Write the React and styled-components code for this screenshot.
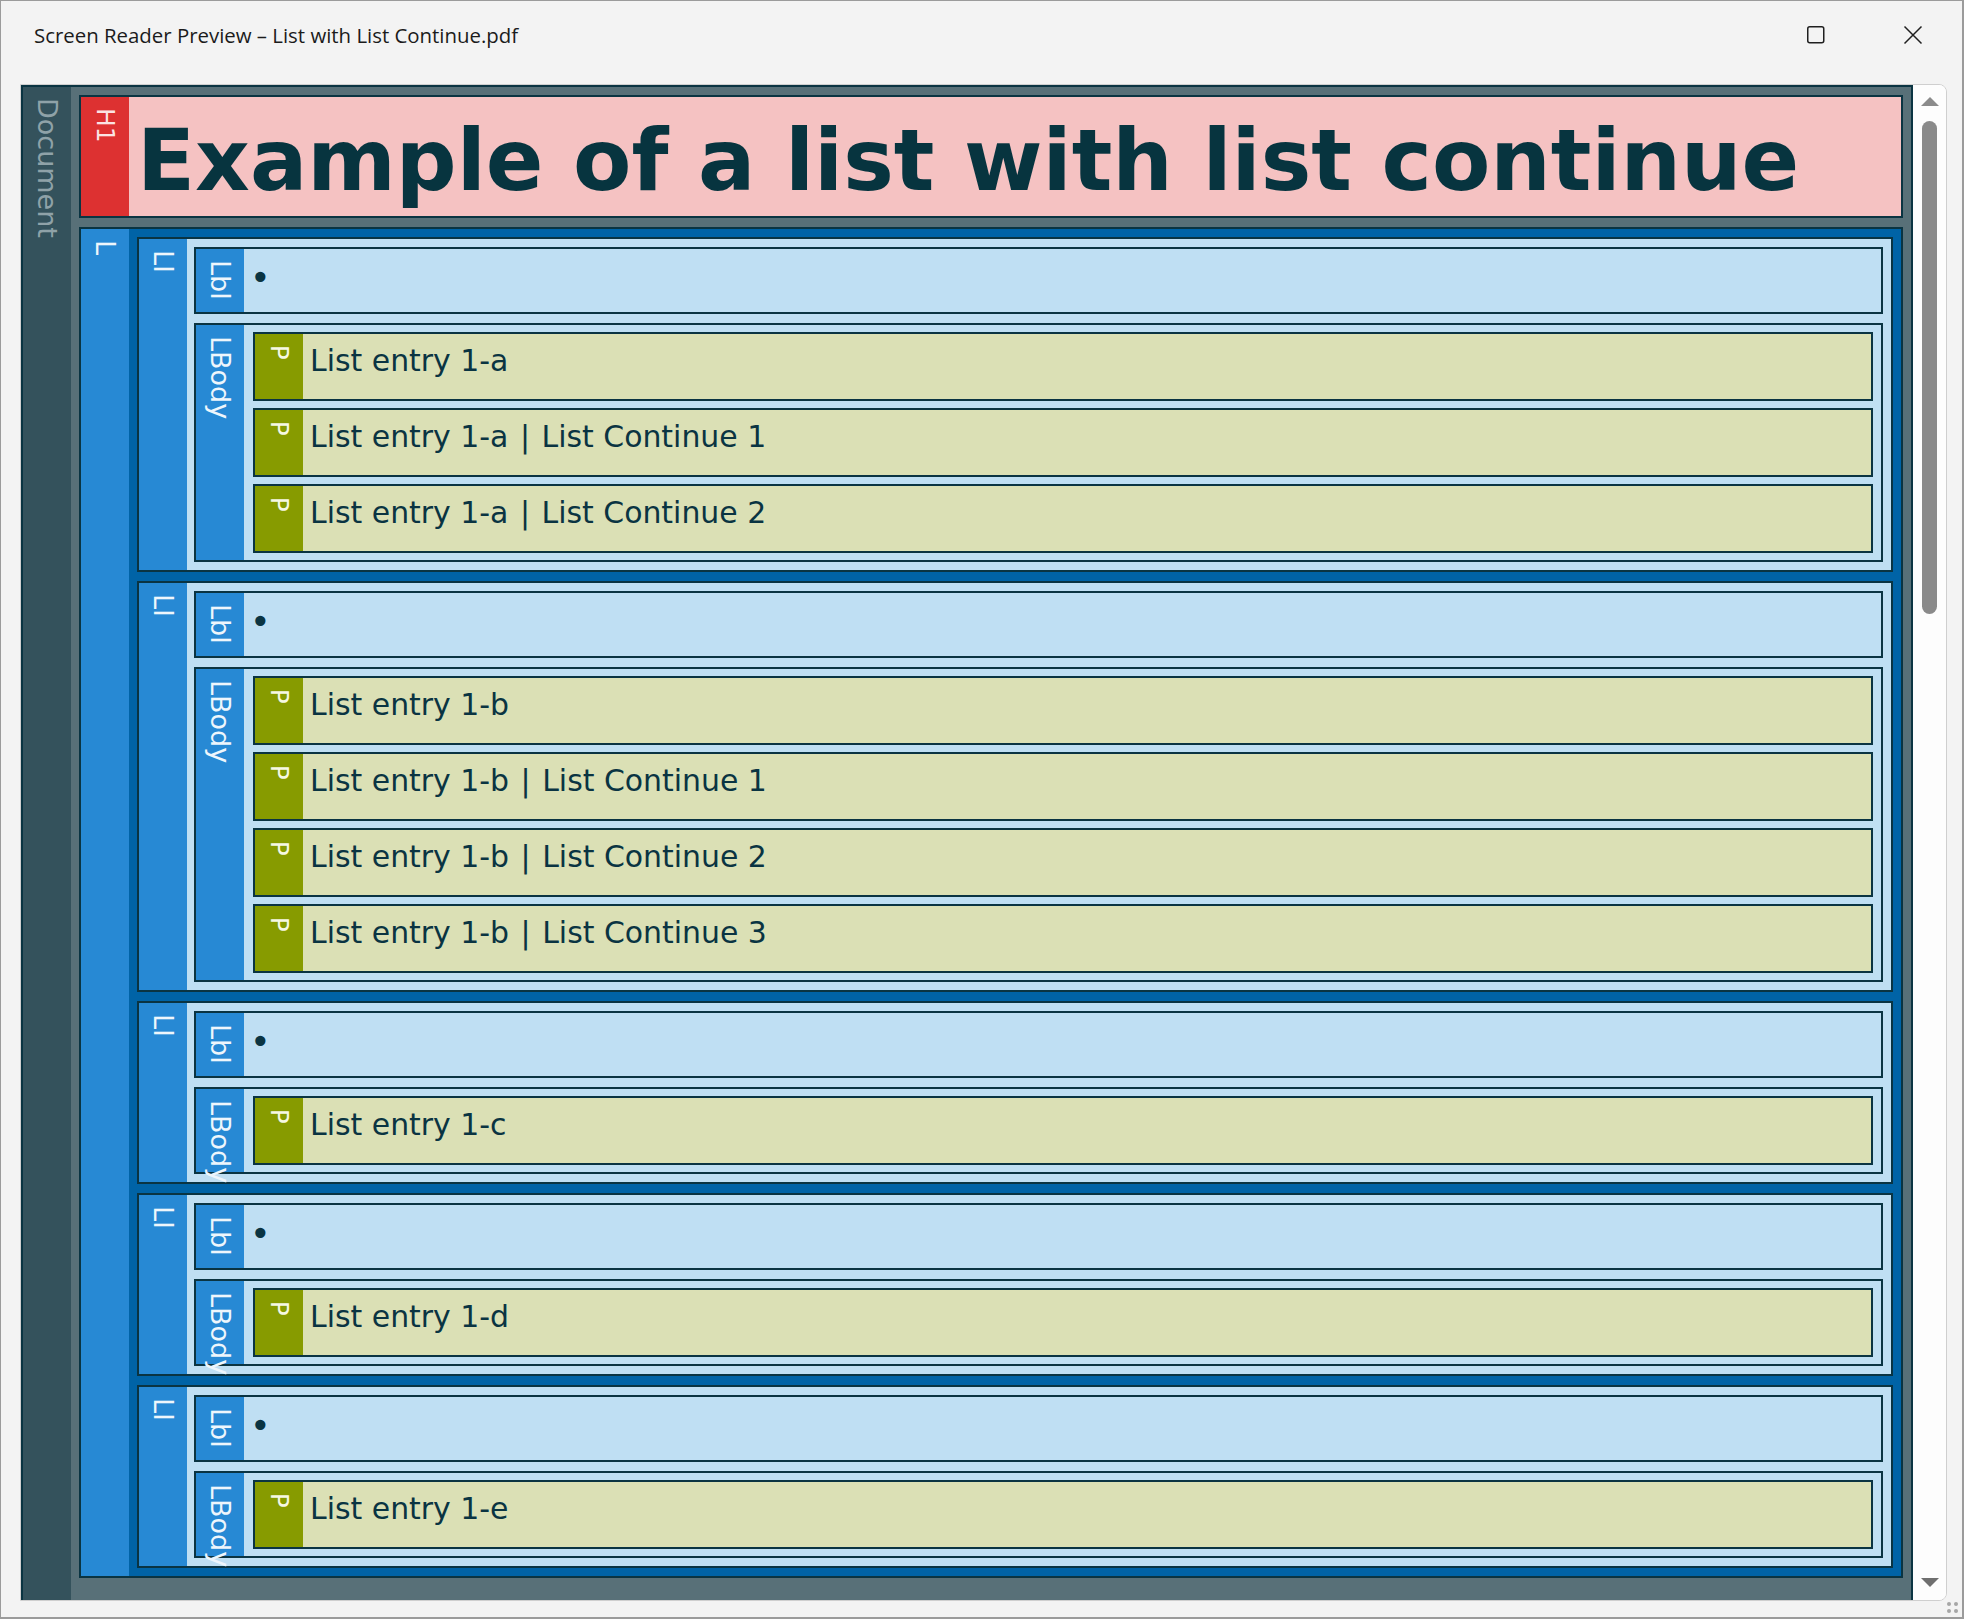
import React from 'react'
import styled, { createGlobalStyle } from 'styled-components'

const INK = '#0a3442';

const TAGS = {
  Document: { strip: '#34525c', label: '#8fa2a8', fill: '#587078' },
  H1: { strip: '#dd3131', label: '#fbe3e3', fill: '#f5c2c2' },
  L: { strip: '#2789d4', label: '#eef6fc', fill: '#0063a6' },
  LI: { strip: '#2789d4', label: '#eef6fc', fill: '#bfdff3' },
  Lbl: { strip: '#2789d4', label: '#eef6fc', fill: '#bfdff3' },
  LBody: { strip: '#2789d4', label: '#eef6fc', fill: '#bfdff3' },
  P: { strip: '#879b00', label: '#f6f8e4', fill: '#dbe0b5' },
};

const GlobalStyle = createGlobalStyle`
  html, body {
    margin: 0;
    padding: 0;
    height: 100%;
    background: #f3f3f3;
  }
  body {
    font-family: 'DejaVu Sans', Verdana, sans-serif;
  }
  #root {
    height: 100%;
  }
`;

const Window = styled.div`
  position: relative;
  box-sizing: border-box;
  height: 100vh;
  border: solid #9b9b9b;
  border-width: 1px 2px 2px 1px;
  background: #f3f3f3;
  display: flex;
  flex-direction: column;
`;

const TitleBar = styled.header`
  height: 83px;
  flex: none;
  display: flex;
  align-items: flex-start;
  padding-left: 33px;
`;

const Title = styled.h1`
  margin: 21px 0 0;
  font: 400 20.4px/26px 'Open Sans', 'Noto Sans', sans-serif;
  color: #1b1b1b;
`;

const Controls = styled.div`
  margin: 24px 39px 0 auto;
  display: flex;
  gap: 77px;
`;

const ControlButton = styled.button`
  width: 20px;
  height: 20px;
  padding: 0;
  border: 0;
  background: none;
  display: flex;
`;

const Panel = styled.main`
  flex: 1;
  min-height: 0;
  margin: 0 15px 16px 19px;
  display: flex;
  border: 1px solid #cfcfcf;
  border-radius: 0 8px 8px 0;
  background: #fdfdfd;
  overflow: hidden;
`;

const Viewport = styled.div`
  flex: 1;
  min-width: 0;
  overflow: hidden;
`;

const Scrollbar = styled.div`
  flex: none;
  width: 33px;
  box-sizing: border-box;
  padding: 11px 0 12px;
  display: flex;
  flex-direction: column;
  align-items: center;
  background: #fdfdfd;
`;

const Thumb = styled.div`
  width: 15px;
  height: 493px;
  margin-top: 15px;
  border-radius: 8px;
  background: #8a8a8a;
`;

const Spacer = styled.div`
  flex: 1;
`;

const Grip = styled.div`
  position: absolute;
  right: 4px;
  bottom: 4px;
  display: grid;
  grid-template-columns: 4px 4px;
  gap: 3px;
  & > span {
    width: 4px;
    height: 4px;
    border-radius: 50%;
    background: #a6a6a6;
  }
`;

/* tag boxes */

const Node = styled.div`
  display: flex;
  flex: none;
  box-sizing: border-box;
  border: 2px solid ${INK};
  background: ${p => TAGS[p.$tag].fill};
  ${p => p.$height ? `height: ${p.$height}px;` : ''}
  ${p => p.$open ? 'border-bottom: 0;' : ''}
`;

const Tag = styled.div`
  flex: none;
  width: 48px;
  contain: size;
  box-sizing: border-box;
  padding-top: 11px;
  writing-mode: vertical-rl;
  white-space: nowrap;
  font: 400 ${p => p.$size || 27}px/48px 'DejaVu Sans', Verdana, sans-serif;
  color: ${p => TAGS[p.$tag].label};
  background: ${p => TAGS[p.$tag].strip};
`;

const Children = styled.div`
  flex: 1;
  min-width: 0;
  display: flex;
  flex-direction: column;
  gap: ${p => p.$gap}px;
  padding: ${p => p.$pad};
`;

const Heading = styled.div`
  flex: 1;
  min-width: 0;
  padding: 9px 0 0 8px;
  font: 700 85px/110px 'DejaVu Sans', Verdana, sans-serif;
  color: #07343f;
  white-space: nowrap;
  overflow: hidden;
`;

const Text = styled.div`
  flex: 1;
  min-width: 0;
  padding: 10px 0 0 7px;
  font: 400 29.9px/34px 'DejaVu Sans', Verdana, sans-serif;
  color: ${INK};
  white-space: nowrap;
`;

const Pipe = styled.span`
  margin: 0 2px;
`;

const Bullet = styled.div`
  flex: 1;
  padding: 12px 0 0 6px;
  font: 400 35px/34px 'DejaVu Sans', Verdana, sans-serif;
  color: ${INK};
`;

const MaximizeIcon = () => (
  <svg width="20" height="20" viewBox="0 0 20 20" fill="none">
    <rect x="1.75" y="1.75" width="16" height="16" rx="2" stroke="#1f1f1f" strokeWidth="1.5" />
  </svg>
);

const CloseIcon = () => (
  <svg width="20" height="20" viewBox="0 0 20 20" fill="none">
    <path d="M1.5 1.5L18.5 18.5M18.5 1.5L1.5 18.5" stroke="#1f1f1f" strokeWidth="1.5" />
  </svg>
);

const Arrow = ({ up, color }) => (
  <svg width="18" height="10" viewBox="0 0 18 10">
    <path d={up ? 'M0 10L9 1L18 10Z' : 'M0 0L18 0L9 9Z'} fill={color} />
  </svg>
);

const items = [
  ['List entry 1-a', 'List entry 1-a | List Continue 1', 'List entry 1-a | List Continue 2'],
  ['List entry 1-b', 'List entry 1-b | List Continue 1', 'List entry 1-b | List Continue 2', 'List entry 1-b | List Continue 3'],
  ['List entry 1-c'],
  ['List entry 1-d'],
  ['List entry 1-e'],
];

const Paragraph = ({ text }) => {
  const [head, tail] = text.split(' | ');
  return (
    <Node $tag="P" $height={69}>
      <Tag $tag="P" $size={24}>P</Tag>
      <Text>
        {head}
        {tail && <> <Pipe>|</Pipe> {tail}</>}
      </Text>
    </Node>
  );
};

const ListItem = ({ entries }) => (
  <Node $tag="LI">
    <Tag $tag="LI">LI</Tag>
    <Children $gap={9} $pad="8px 8px 8px 7px">
      <Node $tag="Lbl" $height={67}>
        <Tag $tag="Lbl">Lbl</Tag>
        <Bullet>•</Bullet>
      </Node>
      <Node $tag="LBody">
        <Tag $tag="LBody">LBody</Tag>
        <Children $gap={7} $pad="7px 8px 7px 9px">
          {entries.map(e => <Paragraph key={e} text={e} />)}
        </Children>
      </Node>
    </Children>
  </Node>
);

const App = () => (
  <>
    <GlobalStyle />
    <Window>
      <TitleBar>
        <Title>Screen Reader Preview – List with List Continue.pdf</Title>
        <Controls>
          <ControlButton aria-label="Maximize"><MaximizeIcon /></ControlButton>
          <ControlButton aria-label="Close"><CloseIcon /></ControlButton>
        </Controls>
      </TitleBar>
      <Panel>
        <Viewport>
          <Node $tag="Document" $open>
            <Tag $tag="Document">Document</Tag>
            <Children $gap={9} $pad="8px 8px 60px 8px">
              <Node $tag="H1" $height={123}>
                <Tag $tag="H1" $size={25}>H1</Tag>
                <Heading>Example of a list with list continue</Heading>
              </Node>
              <Node $tag="L">
                <Tag $tag="L">L</Tag>
                <Children $gap={9} $pad="8px">
                  {items.map((entries, i) => <ListItem key={i} entries={entries} />)}
                </Children>
              </Node>
            </Children>
          </Node>
        </Viewport>
        <Scrollbar>
          <Arrow up color="#8b8b8b" />
          <Thumb />
          <Spacer />
          <Arrow color="#6f6f6f" />
        </Scrollbar>
      </Panel>
      <Grip><span /><span /><span /><span /></Grip>
    </Window>
  </>
);

export default App;
